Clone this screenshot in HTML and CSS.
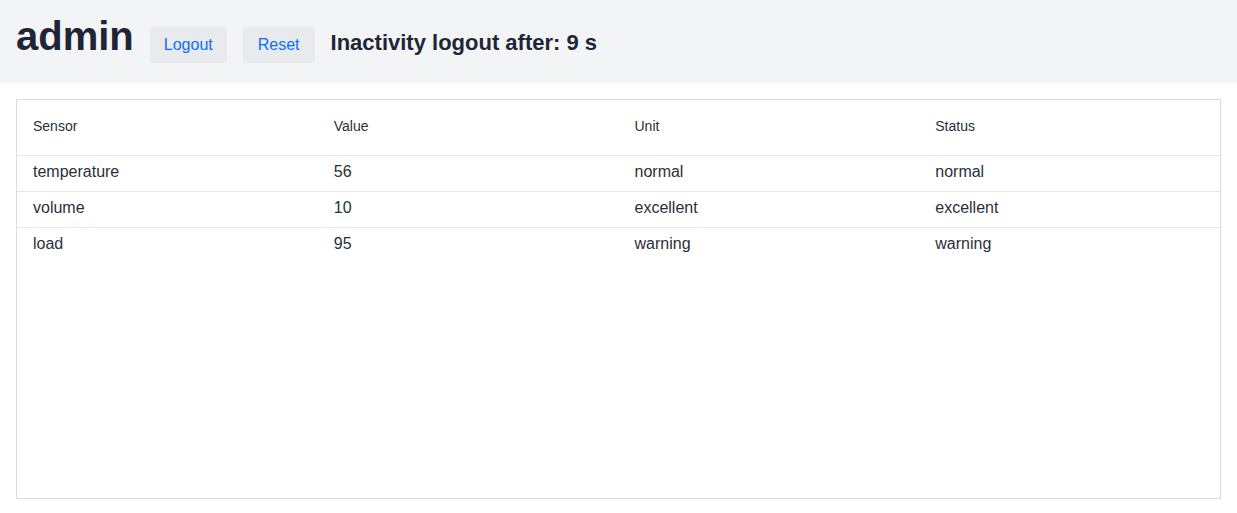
FILE: index.html
```html
<!DOCTYPE html>
<html lang="en">
<head>
<meta charset="utf-8">
<title>admin</title>
<link rel="stylesheet" href="styles.css">
</head>
<body>
<header class="topbar">
  <h1 class="user">admin</h1>
  <button class="btn" type="button">Logout</button>
  <button class="btn" type="button">Reset</button>
  <span class="timer">Inactivity logout after: 9 s</span>
</header>
<main class="panel">
  <table class="sensors">
    <thead>
      <tr><th>Sensor</th><th>Value</th><th>Unit</th><th>Status</th></tr>
    </thead>
    <tbody>
      <tr><td>temperature</td><td>56</td><td>normal</td><td>normal</td></tr>
      <tr><td>volume</td><td>10</td><td>excellent</td><td>excellent</td></tr>
      <tr><td>load</td><td>95</td><td>warning</td><td>warning</td></tr>
    </tbody>
  </table>
</main>
</body>
</html>
```
FILE: styles.css
```css
* { box-sizing: border-box; }
html, body { margin: 0; padding: 0; }
body {
  font-family: "Liberation Sans", Arial, sans-serif;
  color: #2b3036;
  background: #fff;
}
.topbar {
  height: 83px;
  background: #f3f4f6;
  display: flex;
  align-items: baseline;
  gap: 16px;
  padding: 12px 16px 0 16px;
}
.user {
  margin: 0;
  font-size: 40px;
  font-weight: 700;
  color: #1e2636;
  line-height: 48px;
}
.btn {
  font-family: inherit;
  font-size: 16px;
  line-height: 24px;
  color: #0d6efd;
  background: #e8eaed;
  border: none;
  border-radius: 4px;
  padding: 6px 14px;
  cursor: pointer;
}
.btn + .btn { padding: 6px 15px; }
.timer {
  font-size: 22px;
  font-weight: 700;
  color: #1e2636;
}
.panel {
  margin: 16px 16px 0 16px;
  height: 400px;
  border: 1px solid #dcdcdc;
}
.sensors {
  width: 100%;
  table-layout: fixed;
  border-collapse: collapse;
}
.sensors th {
  text-align: left;
  font-weight: 400;
  font-size: 14px;
  line-height: 19px;
  padding: 17px 16px 19px;
  border-bottom: 1px solid #e5e7eb;
}
.sensors td {
  font-size: 16px;
  line-height: 19px;
  padding: 6px 16px 10px;
  border-bottom: 1px solid #e5e7eb;
}
.sensors tbody tr:last-child td { border-bottom: none; }
```
